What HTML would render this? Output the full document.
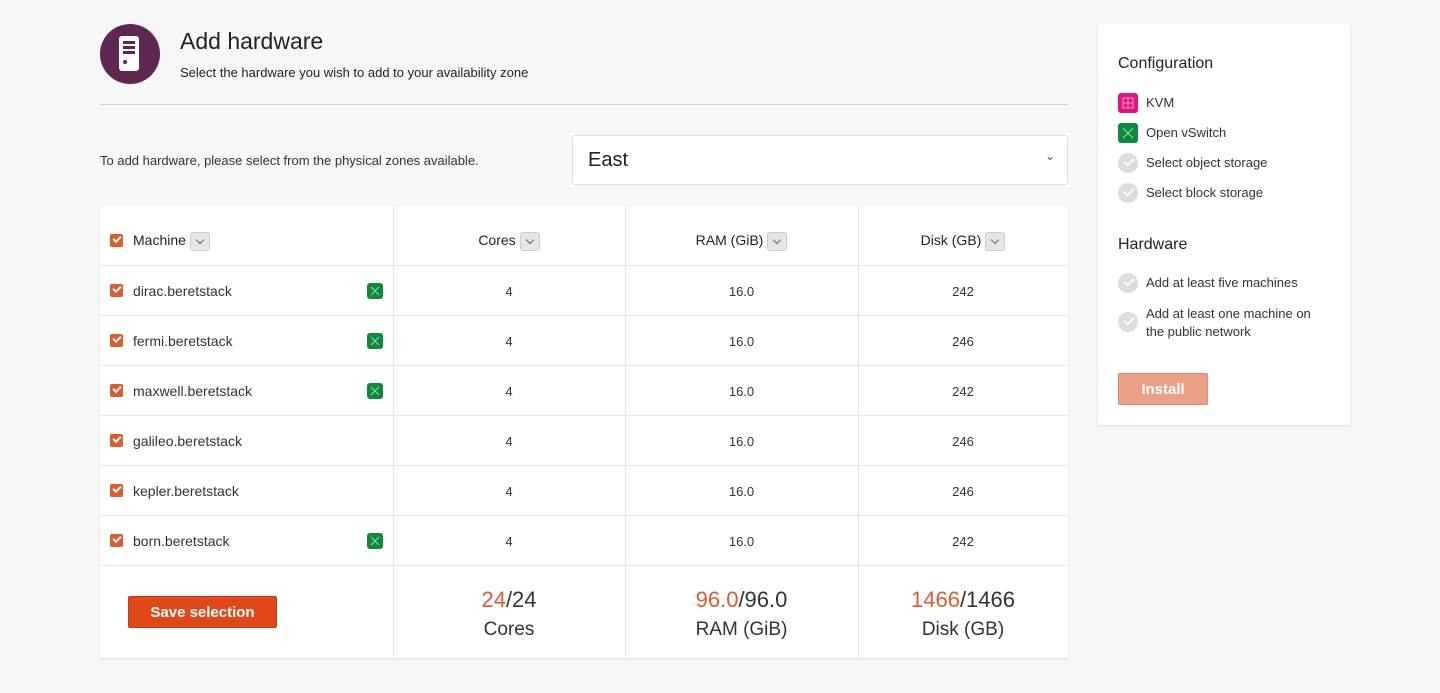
<!DOCTYPE html>
<html><head><meta charset="utf-8"><style>
*{box-sizing:border-box;margin:0;padding:0}
body{width:1440px;height:693px;background:#f7f7f7;font-family:"Liberation Sans",sans-serif;color:#333;position:relative;overflow:hidden;font-size:14px}
.a{position:absolute}
.cb{position:absolute;width:13px;height:13px;background:#e05a2b;border-radius:2px}
.cb:after{content:"";position:absolute;left:3px;top:2px;width:6px;height:3px;border-left:2px solid #fff;border-bottom:2px solid #fff;transform:rotate(-45deg)}
.dd{display:inline-block;width:20px;height:19px;background:#e6e6e6;border:1px solid #ccc;border-radius:3px;vertical-align:middle;margin-left:4px;position:relative}
.dd:after{content:"";position:absolute;left:6px;top:4px;width:5px;height:5px;border-right:1px solid #666;border-bottom:1px solid #666;transform:rotate(45deg)}
.g{position:absolute;width:16px;height:16px;background:#0e8a3e;border-radius:3px;overflow:hidden}
.g svg,.gi svg{position:absolute;left:0;top:0}
.vl{position:absolute;top:206px;height:452px;width:1px;background:#e5e5e5}
.hl{position:absolute;left:100px;width:968px;height:1px;background:#e5e5e5}
.c{position:absolute;text-align:center}
.chk{position:absolute;width:20px;height:20px;border-radius:50%;background:#ddd}
.chk:after{content:"";position:absolute;left:6px;top:5px;width:8px;height:4px;border-left:2px solid #fff;border-bottom:2px solid #fff;transform:rotate(-45deg)}
.or{color:#e05a2b}
.h{color:#222;top:232px}
</style></head><body>
<div class="a" style="left:100px;top:24px;width:60px;height:60px;border-radius:50%;background:#5e2750"></div>
<div class="a" style="left:119px;top:36px;width:20px;height:35px;background:#fff;border-radius:3px"></div>
<div class="a" style="left:123px;top:41px;width:12px;height:3px;background:#5e2750"></div>
<div class="a" style="left:123px;top:46px;width:12px;height:3px;background:#5e2750"></div>
<div class="a" style="left:123px;top:51px;width:12px;height:3px;background:#5e2750"></div>
<div class="a" style="left:123px;top:60px;width:4px;height:4px;border-radius:50%;background:#5e2750"></div>
<div class="a" style="left:180px;top:28px;font-size:23px;color:#222">Add hardware</div>
<div class="a" style="left:180px;top:65px;font-size:13px;color:#222">Select the hardware you wish to add to your availability zone</div>
<div class="a" style="left:100px;top:104px;width:968px;height:1px;background:#ccc"></div>
<div class="a" style="left:100px;top:153px;font-size:13px">To add hardware, please select from the physical zones available.</div>
<div class="a" style="left:572px;top:135px;width:496px;height:50px;background:#fff;border:1px solid #ddd;border-radius:3px;font-size:20px;padding:13px 15px;color:#222">East<span style="position:absolute;right:12px;top:13px;font-size:12px;color:#555">&#8964;</span></div>

<div class="a" style="left:100px;top:206px;width:968px;height:452px;background:#fff;box-shadow:0 1px 2px rgba(0,0,0,.12)"></div>
<div class="vl" style="left:393px"></div><div class="vl" style="left:625px"></div><div class="vl" style="left:858px"></div>
<div class="hl" style="top:265px"></div><div class="hl" style="top:315px"></div><div class="hl" style="top:365px"></div><div class="hl" style="top:415px"></div><div class="hl" style="top:465px"></div><div class="hl" style="top:515px"></div><div class="hl" style="top:565px"></div>

<div class="cb" style="left:110px;top:234px"></div>
<div class="a h" style="left:133px">Machine<span class="dd"></span></div>
<div class="c h" style="left:393px;width:232px">Cores<span class="dd"></span></div>
<div class="c h" style="left:625px;width:233px">RAM (GiB)<span class="dd"></span></div>
<div class="c h" style="left:858px;width:210px">Disk (GB)<span class="dd"></span></div>

<svg width="0" height="0" style="position:absolute"><defs><g id="x"><path d="M4 4L12 12M12 4L4 12" stroke="#9fd6b2" stroke-width="1" fill="none"/></g></defs></svg>

<div class="cb" style="left:110px;top:284px"></div><div class="a" style="left:133px;top:283px">dirac.beretstack</div><div class="g" style="left:367px;top:283px"><svg width="16" height="16"><use href="#x"/></svg></div>
<div class="c" style="left:393px;width:232px;top:284px;font-size:13px">4</div><div class="c" style="left:625px;width:233px;top:284px;font-size:13px">16.0</div><div class="c" style="left:858px;width:210px;top:284px;font-size:13px">242</div>

<div class="cb" style="left:110px;top:334px"></div><div class="a" style="left:133px;top:333px">fermi.beretstack</div><div class="g" style="left:367px;top:333px"><svg width="16" height="16"><use href="#x"/></svg></div>
<div class="c" style="left:393px;width:232px;top:334px;font-size:13px">4</div><div class="c" style="left:625px;width:233px;top:334px;font-size:13px">16.0</div><div class="c" style="left:858px;width:210px;top:334px;font-size:13px">246</div>

<div class="cb" style="left:110px;top:384px"></div><div class="a" style="left:133px;top:383px">maxwell.beretstack</div><div class="g" style="left:367px;top:383px"><svg width="16" height="16"><use href="#x"/></svg></div>
<div class="c" style="left:393px;width:232px;top:384px;font-size:13px">4</div><div class="c" style="left:625px;width:233px;top:384px;font-size:13px">16.0</div><div class="c" style="left:858px;width:210px;top:384px;font-size:13px">242</div>

<div class="cb" style="left:110px;top:434px"></div><div class="a" style="left:133px;top:433px">galileo.beretstack</div>
<div class="c" style="left:393px;width:232px;top:434px;font-size:13px">4</div><div class="c" style="left:625px;width:233px;top:434px;font-size:13px">16.0</div><div class="c" style="left:858px;width:210px;top:434px;font-size:13px">246</div>

<div class="cb" style="left:110px;top:484px"></div><div class="a" style="left:133px;top:483px">kepler.beretstack</div>
<div class="c" style="left:393px;width:232px;top:484px;font-size:13px">4</div><div class="c" style="left:625px;width:233px;top:484px;font-size:13px">16.0</div><div class="c" style="left:858px;width:210px;top:484px;font-size:13px">246</div>

<div class="cb" style="left:110px;top:534px"></div><div class="a" style="left:133px;top:533px">born.beretstack</div><div class="g" style="left:367px;top:533px"><svg width="16" height="16"><use href="#x"/></svg></div>
<div class="c" style="left:393px;width:232px;top:534px;font-size:13px">4</div><div class="c" style="left:625px;width:233px;top:534px;font-size:13px">16.0</div><div class="c" style="left:858px;width:210px;top:534px;font-size:13px">242</div>

<div class="a" style="left:128px;top:596px;width:149px;height:32px;background:#e0481a;border:1px solid #c23b10;border-radius:2px;color:#fff;font-size:15px;font-weight:bold;text-align:center;line-height:31px">Save selection</div>
<div class="c" style="left:393px;width:232px;top:586px;font-size:22px;line-height:28px"><span class="or">24</span>/24<br><span style="font-size:19px">Cores</span></div>
<div class="c" style="left:625px;width:233px;top:586px;font-size:22px;line-height:28px"><span class="or">96.0</span>/96.0<br><span style="font-size:19px">RAM (GiB)</span></div>
<div class="c" style="left:858px;width:210px;top:586px;font-size:22px;line-height:28px"><span class="or">1466</span>/1466<br><span style="font-size:19px">Disk (GB)</span></div>

<div class="a" style="left:1098px;top:24px;width:252px;height:401px;background:#fff;box-shadow:0 1px 2px rgba(0,0,0,.12)"></div>
<div class="a" style="left:1118px;top:55px;font-size:16px;color:#222">Configuration</div>
<div class="a gi" style="left:1118px;top:93px;width:20px;height:20px;background:#e0157f;border-radius:3px"><svg width="20" height="20"><rect x="5" y="5" width="10" height="10" fill="none" stroke="#f39cc9"/><path d="M10 5V15M5 10H15" stroke="#f39cc9"/></svg></div>
<div class="a" style="left:1146px;top:95px;font-size:13px">KVM</div>
<div class="a gi" style="left:1118px;top:123px;width:20px;height:20px;background:#0e8a3e;border-radius:3px"><svg width="20" height="20"><path d="M5 5L15 15M15 5L5 15" stroke="#9fd6b2"/></svg></div>
<div class="a" style="left:1146px;top:125px;font-size:13px">Open vSwitch</div>
<div class="chk" style="left:1118px;top:153px"></div><div class="a" style="left:1146px;top:155px;font-size:13px">Select object storage</div>
<div class="chk" style="left:1118px;top:183px"></div><div class="a" style="left:1146px;top:185px;font-size:13px">Select block storage</div>
<div class="a" style="left:1118px;top:236px;font-size:16px;color:#222">Hardware</div>
<div class="chk" style="left:1118px;top:273px"></div><div class="a" style="left:1146px;top:275px;font-size:13px">Add at least five machines</div>
<div class="chk" style="left:1118px;top:312px"></div><div class="a" style="left:1146px;top:305px;font-size:13px;line-height:18px">Add at least one machine on<br>the public network</div>
<div class="a" style="left:1118px;top:373px;width:90px;height:32px;background:#eba086;border:1px solid #d88c72;border-radius:2px;color:#fff;font-size:15px;font-weight:bold;text-align:center;line-height:31px">Install</div>
</body></html>
